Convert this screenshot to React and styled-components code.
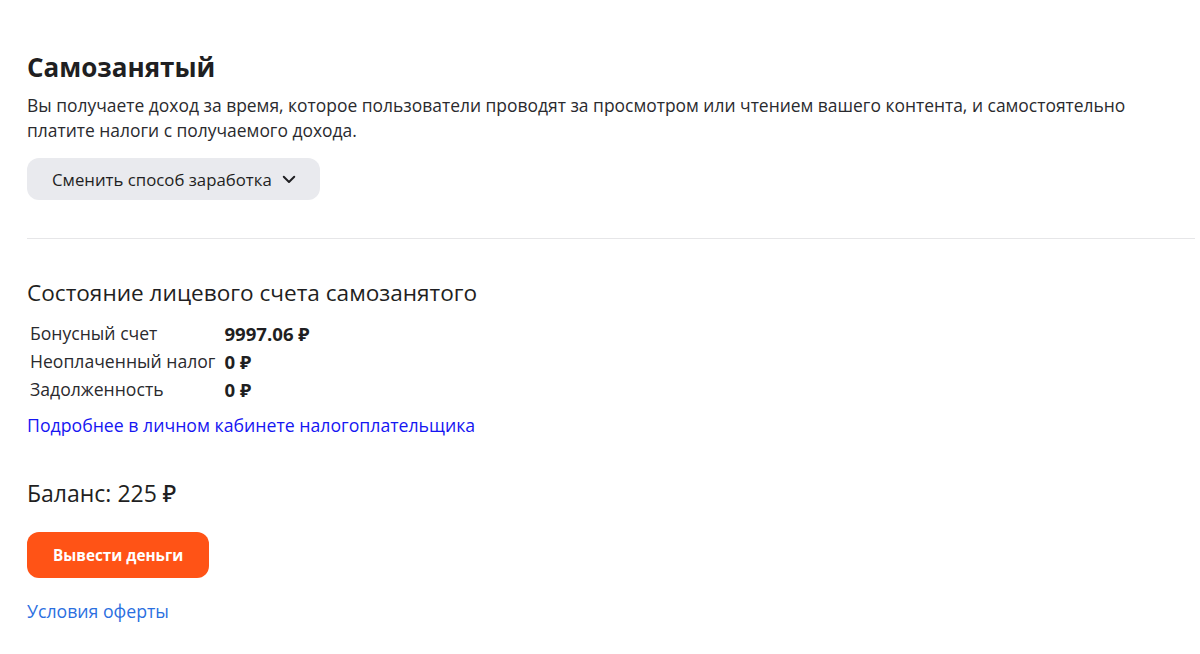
import styled, { createGlobalStyle } from "styled-components";

const GlobalStyle = createGlobalStyle`
  body {
    margin: 0;
    background: #fff;
    font-family: "Open Sans", "Noto Sans", sans-serif;
    color: #222226;
  }
`;

const Page = styled.div`
  padding: 48px 5px 30px 27px;
`;

const Section = styled.section``;

const Title = styled.h1`
  font-size: 26px;
  font-weight: 700;
  line-height: 38px;
  margin: 0 0 7px;
  color: #1f1f22;
`;

const Text = styled.p`
  font-size: 17.45px;
  line-height: 25px;
  margin: 0 0 15px;
  color: #2a2a2e;
  max-width: 1120px;
`;

const SwitchButton = styled.button`
  display: inline-flex;
  align-items: center;
  gap: 8px;
  height: 42px;
  padding: 0 22px 0 25px;
  border: none;
  border-radius: 12px;
  background: #e9eaee;
  font-family: inherit;
  font-size: 16.8px;
  font-weight: 500;
  color: #1f1f22;
  cursor: pointer;
`;

const Divider = styled.hr`
  border: none;
  border-top: 1px solid #e6e6e8;
  margin: 38px 0 39px;
`;

const Subtitle = styled.h2`
  font-size: 22.6px;
  font-weight: 500;
  line-height: 30px;
  margin: 0 0 11px;
  color: #1f1f22;
`;

const Table = styled.table`
  border-collapse: collapse;
  font-size: 17.6px;
`;

const Label = styled.td`
  padding: 0 8px 0 3px;
  height: 28px;
  color: #2a2a2e;
`;

const Value = styled.td`
  padding: 0 3px 0 1px;
  font-weight: 700;
  font-size: 18.6px;
  color: #1f1f22;
`;

const TaxLink = styled.a`
  display: inline-block;
  margin-top: 10px;
  font-size: 17.7px;
  line-height: 24px;
  color: #1616f2;
  text-decoration: none;
`;

const Balance = styled.div`
  font-size: 23px;
  font-weight: 500;
  line-height: 30px;
  margin: 41px 0 24px;
  color: #1f1f22;
`;

const WithdrawButton = styled.button`
  display: block;
  height: 46px;
  padding: 0 26px;
  border: none;
  border-radius: 12px;
  background: #ff5316;
  color: #fff;
  font-family: inherit;
  font-size: 15.3px;
  font-weight: 700;
  cursor: pointer;
`;

const OfferLink = styled.a`
  display: inline-block;
  margin-top: 21px;
  font-size: 17.7px;
  line-height: 24px;
  color: #2b6fdf;
  text-decoration: none;
`;

const Chevron = () => (
  <svg width="18" height="18" viewBox="0 0 24 24" fill="none" stroke="currentColor" strokeWidth="2.6" strokeLinecap="round" strokeLinejoin="round">
    <path d="M5 9l7 7 7-7" />
  </svg>
);

const rows = [
  { label: "Бонусный счет", value: "9997.06 ₽" },
  { label: "Неоплаченный налог", value: "0 ₽" },
  { label: "Задолженность", value: "0 ₽" },
];

export default function App() {
  return (
    <>
      <GlobalStyle />
      <Page>
        <Section>
          <Title>Самозанятый</Title>
          <Text>
            Вы получаете доход за время, которое пользователи проводят за просмотром или чтением вашего контента, и самостоятельно
            платите налоги с получаемого дохода.
          </Text>
          <SwitchButton>
            Сменить способ заработка
            <Chevron />
          </SwitchButton>
        </Section>
        <Divider />
        <Section>
          <Subtitle>Состояние лицевого счета самозанятого</Subtitle>
          <Table>
            <tbody>
              {rows.map((r) => (
                <tr key={r.label}>
                  <Label>{r.label}</Label>
                  <Value>{r.value}</Value>
                </tr>
              ))}
            </tbody>
          </Table>
          <TaxLink href="#">Подробнее в личном кабинете налогоплательщика</TaxLink>
          <Balance>Баланс: 225 ₽</Balance>
          <WithdrawButton>Вывести деньги</WithdrawButton>
          <OfferLink href="#">Условия оферты</OfferLink>
        </Section>
      </Page>
    </>
  );
}
